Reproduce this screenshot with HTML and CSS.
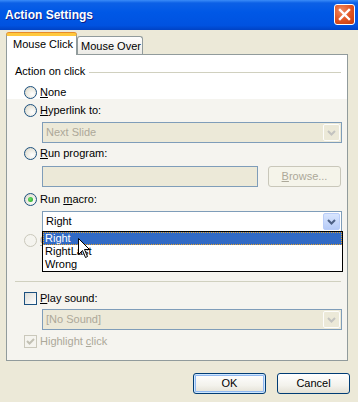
FILE: index.html
```html
<!DOCTYPE html>
<html lang="en">
<head>
    <meta charset="UTF-8">
    <title>Action Settings</title>
    <link rel="stylesheet" href="styles.css">
</head>
<body>
    <div class="titlebar">
        <span class="title">Action Settings</span>
        <div class="close-btn">
            <svg width="13" height="13" viewBox="0 0 13 13"><path d="M2 2 L11 11 M11 2 L2 11" stroke="#fff" stroke-width="2.4" stroke-linecap="square"/></svg>
        </div>
    </div>

    <div class="window-body">
        <div class="tabs">
            <div class="tab active">Mouse Click</div>
            <div class="tab">Mouse Over</div>
        </div>

        <div class="panel">
            <div class="group-head">
                <span>Action on click</span>
                <div class="group-line"></div>
            </div>

            <div class="option row-none">
                <span class="radio"></span>
                <span class="label"><u>N</u>one</span>
            </div>

            <div class="option row-link">
                <span class="radio"></span>
                <span class="label"><u>H</u>yperlink to:</span>
            </div>
            <div class="combo disabled field-link">
                <span class="combo-text">Next Slide</span>
                <span class="combo-btn">
                    <svg width="9" height="6" viewBox="0 0 9 6"><path d="M1 1 L4.5 4.5 L8 1" fill="none" stroke="#c3c3c0" stroke-width="2"/></svg>
                </span>
            </div>

            <div class="option row-program">
                <span class="radio"></span>
                <span class="label"><u>R</u>un program:</span>
            </div>
            <div class="program-row">
                <div class="textbox disabled"></div>
                <div class="btn disabled-btn"><u>B</u>rowse...</div>
            </div>

            <div class="option row-macro">
                <span class="radio checked"></span>
                <span class="label">Run <u>m</u>acro:</span>
            </div>
            <div class="combo field-macro">
                <span class="combo-text">Right</span>
                <span class="combo-btn active-btn">
                    <svg width="9" height="6" viewBox="0 0 9 6"><path d="M1 1 L4.5 4.5 L8 1" fill="none" stroke="#4d6185" stroke-width="2"/></svg>
                </span>
                <ul class="dropdown">
                    <li class="selected">Right</li>
                    <li>RightLast</li>
                    <li>Wrong</li>
                </ul>
                <svg class="cursor" width="13" height="21" viewBox="0 0 13 21">
                    <path d="M0.5 0.5 L0.5 16.5 L4.5 12.5 L7.5 19.5 L9.5 18.5 L6.5 11.5 L11.5 11.5 Z" fill="#fff" stroke="#000" stroke-width="1"/>
                </svg>
            </div>

            <div class="option row-object">
                <span class="radio off"></span>
                <span class="label muted clipped"><u>O</u>bject action:</span>
            </div>
            <div class="combo disabled field-object"></div>

            <div class="separator"></div>

            <div class="option row-sound">
                <span class="checkbox"></span>
                <span class="label"><u>P</u>lay sound:</span>
            </div>
            <div class="combo disabled field-sound">
                <span class="combo-text">[No Sound]</span>
                <span class="combo-btn">
                    <svg width="9" height="6" viewBox="0 0 9 6"><path d="M1 1 L4.5 4.5 L8 1" fill="none" stroke="#c3c3c0" stroke-width="2"/></svg>
                </span>
            </div>

            <div class="option row-highlight">
                <span class="checkbox off">
                    <svg width="11" height="11" viewBox="0 0 11 11"><path d="M2 5 L4.5 7.5 L9 3" fill="none" stroke="#c2c0b4" stroke-width="2"/></svg>
                </span>
                <span class="label muted">Highlight <u>c</u>lick</span>
            </div>
        </div>

        <div class="actions">
            <div class="btn default">OK</div>
            <div class="btn">Cancel</div>
        </div>
    </div>
</body>
</html>
```

FILE: styles.css
```css
:root {
    --face: #ece9d8;
    --tab-border: #919b9c;
    --field-border: #7f9db9;
    --muted: #aca899;
}

* {
    margin: 0;
    padding: 0;
    box-sizing: border-box;
}

body {
    width: 358px;
    height: 402px;
    overflow: hidden;
    background-color: var(--face);
    font-family: 'Liberation Sans', Arial, sans-serif;
    font-size: 11px;
    line-height: 13px;
    color: #000;
}

u {
    text-decoration: underline;
}

/* Title bar */
.titlebar {
    height: 30px;
    display: flex;
    align-items: flex-start;
    padding: 0 3px 0 5px;
    background: linear-gradient(to bottom, #3a8cf8 0, #0c60e6 3px, #0058e6 40%, #0052e0 85%, #0042c4 100%);
}

.title {
    padding-top: 8px;
    font-size: 12px;
    line-height: 14px;
    font-weight: bold;
    color: #fff;
    text-shadow: 1px 1px #0a1f8a;
}

.close-btn {
    margin-left: auto;
    margin-top: 4px;
    width: 21px;
    height: 21px;
    border: 1px solid #fff;
    border-radius: 3px;
    background: radial-gradient(circle at 35% 30%, #f08a62 0, #e0521f 55%, #c2380c 100%);
    display: flex;
    justify-content: center;
    align-items: center;
}

/* Tabs */
.window-body {
    padding: 3px 0 0 6px;
}

.tabs {
    display: flex;
    align-items: flex-end;
    height: 22px;
    margin-bottom: -1px;
}

.tab {
    width: 66px;
    height: 18px;
    margin-bottom: 1px;
    padding: 3px 0 0 3px;
    border: 1px solid var(--tab-border);
    border-bottom: none;
    border-radius: 3px 3px 0 0;
    background: linear-gradient(to bottom, #fefefe, #ecebe6);
}

.tab.active {
    position: relative;
    z-index: 1;
    width: 71px;
    height: 22px;
    margin-bottom: 0;
    padding: 2px 0 0 6px;
    border-top: 3px solid #ffc83c;
    background: #fff;
    box-shadow: 0 -1px 0 #e68b2c;
}

/* Panel */
.panel {
    width: 342px;
    height: 307px;
    border: 1px solid var(--tab-border);
    padding: 10px 6px 0 8px;
    background: linear-gradient(to bottom, #fff 0, #fff 44px, #f5f4ef 44px);
}

.group-head {
    display: flex;
    align-items: center;
    height: 13px;
}

.group-line {
    flex: 1;
    height: 1px;
    margin-left: 4px;
    margin-top: 1px;
    background-color: #d0d0bf;
}

.option {
    display: flex;
    align-items: center;
    height: 13px;
    padding-left: 9px;
}

.option .label {
    margin-left: 3px;
}

.muted {
    color: var(--muted);
}

/* only a sliver of this label shows beside the open list */
.label.clipped {
    width: 3px;
    overflow: hidden;
    white-space: nowrap;
}

.row-none { margin-top: 8px; }
.row-link { margin-top: 5px; }
.row-program { margin-top: 4px; }
.row-macro { margin-top: 6px; }
.row-object { margin-top: 2px; }
.row-sound { margin-top: 10px; }
.row-highlight { margin-top: 5px; }

.radio {
    width: 13px;
    height: 13px;
    border-radius: 50%;
    border: 1px solid #1c5180;
    background: radial-gradient(circle at 65% 65%, #fff 0, #e8e6dc 60%, #c9c6b6 100%);
    display: flex;
    justify-content: center;
    align-items: center;
    flex-shrink: 0;
}

.radio.checked::after {
    content: '';
    width: 5px;
    height: 5px;
    border-radius: 50%;
    background: radial-gradient(circle at 40% 40%, #6ae36a, #1d9a1d);
}

.radio.off {
    border-color: #cac8bb;
    background: #f5f4ef;
}

.checkbox {
    width: 13px;
    height: 13px;
    border: 1px solid #1c5180;
    background: linear-gradient(135deg, #dcdcd7 0, #fff 100%);
    flex-shrink: 0;
    display: flex;
}

.checkbox.off {
    border-color: #cac8bb;
    background: #f5f4ef;
}

/* Fields */
.combo {
    position: relative;
    width: 300px;
    height: 21px;
    margin-left: 27px;
    border: 1px solid var(--field-border);
    background: #fff;
    display: flex;
    align-items: center;
}

.combo.disabled {
    background: var(--face);
    color: var(--muted);
}

.combo-text {
    padding-left: 3px;
    flex: 1;
}

.combo-btn {
    width: 17px;
    height: 17px;
    margin-right: 1px;
    border: 1px solid #fdfdfb;
    border-radius: 2px;
    display: flex;
    justify-content: center;
    align-items: center;
}

.combo-btn.active-btn {
    border-color: #b9cdf9;
    background: linear-gradient(to bottom, #d9e6ff, #b6cbf7);
}

.field-link { margin-top: 5px; }
.field-macro { margin-top: 5px; }
.field-object { margin-top: 4px; }
.field-sound { margin-top: 4px; }

.program-row {
    display: flex;
    align-items: center;
    margin-top: 6px;
    margin-left: 27px;
    gap: 10px;
}

.textbox {
    width: 216px;
    height: 21px;
    border: 1px solid var(--field-border);
}

.textbox.disabled {
    background: var(--face);
}

.separator {
    height: 1px;
    margin-top: 9px;
    background-color: #d0d0bf;
}

/* Open list of the macro combo */
.dropdown {
    position: absolute;
    left: -1px;
    top: 19px;
    z-index: 2;
    width: 301px;
    height: 41px;
    list-style: none;
    border: 1px solid #000;
    background: #fff;
}

.dropdown li {
    height: 13px;
    padding-left: 2px;
    line-height: 13px;
}

.dropdown li.selected {
    background-color: #316ac5;
    color: #fff;
    outline: 1px dotted #e0a030;
    outline-offset: -1px;
}

.cursor {
    position: absolute;
    left: 35px;
    top: 26px;
    z-index: 3;
}

/* Buttons */
.btn {
    width: 73px;
    height: 21px;
    border: 1px solid #003c74;
    border-radius: 3px;
    background: linear-gradient(to bottom, #fff 0, #f3f2ec 60%, #e3e0d4 100%);
    display: flex;
    justify-content: center;
    align-items: center;
}

.btn.default {
    box-shadow: inset 0 0 0 1px #cee7ff, inset 0 0 0 2px #90b8f0;
}

.disabled-btn {
    border-color: #c9c7ba;
    background: #f5f4ea;
    color: var(--muted);
}

.actions {
    display: flex;
    justify-content: flex-end;
    gap: 11px;
    margin-top: 12px;
    padding-right: 8px;
}
```
